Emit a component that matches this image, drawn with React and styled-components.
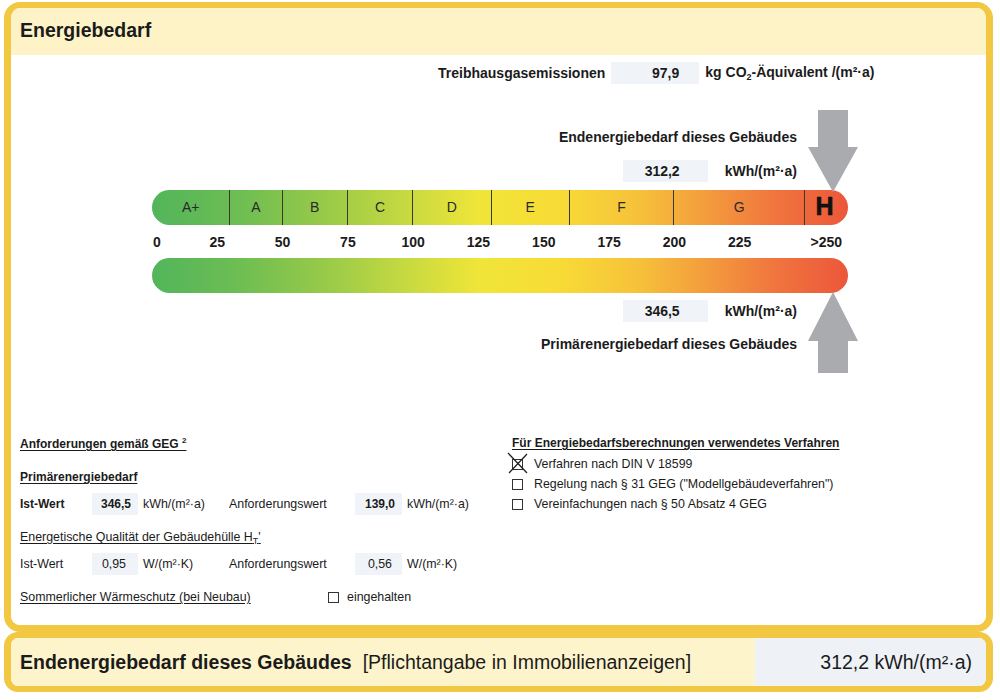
import React from 'react';
import styled, { createGlobalStyle } from 'styled-components';

const GlobalStyle = createGlobalStyle`
  html, body {
    margin: 0;
    padding: 0;
    background: #ffffff;
  }
  body {
    font-family: "Liberation Sans", Arial, sans-serif;
    color: #1b1b1b;
  }
`;

// px per kWh/(m²·a) on the scale
const SCALE = 2.612;

const classes = [
    { label: 'A+', from: 0, to: 30 },
    { label: 'A', from: 30, to: 50 },
    { label: 'B', from: 50, to: 75 },
    { label: 'C', from: 75, to: 100 },
    { label: 'D', from: 100, to: 130 },
    { label: 'E', from: 130, to: 160 },
    { label: 'F', from: 160, to: 200 },
    { label: 'G', from: 200, to: 250 },
    { label: 'H', from: 250, to: null },
];

const ticks = [25, 50, 75, 100, 125, 150, 175, 200, 225];

const methods = [
    { text: 'Verfahren nach DIN V 18599', checked: true },
    { text: 'Regelung nach § 31 GEG ("Modellgebäudeverfahren")', checked: false },
    { text: 'Vereinfachungen nach § 50 Absatz 4 GEG', checked: false },
];

const DownArrow = () => (
    <ArrowSvg width="50" height="80" viewBox="0 0 50 80">
        <polygon points="10,0 40,0 40,37 50,37 25,82 0,37 10,37" fill="#a9abae" />
    </ArrowSvg>
);

const UpArrow = () => (
    <ArrowSvg width="50" height="80" viewBox="0 0 50 80">
        <polygon points="25,-1 50,48 40,48 40,80 10,80 10,48 0,48" fill="#a9abae" />
    </ArrowSvg>
);

const CheckBox = ({ checked }) => (
    <BoxWrap>
        <Box />
        {checked && (
            <Cross width="20" height="20" viewBox="0 0 20 20">
                <path d="M0 -1 L19 19 M19 0 L1 19" stroke="#222" strokeWidth="1.3" fill="none" />
            </Cross>
        )}
    </BoxWrap>
);

const App = () => {
    return (
        <Page>
            <GlobalStyle />
            <TopPanel>
                <Header>Energiebedarf</Header>
                <Body>
                    <EmissionRow>
                        <span>Treibhausgasemissionen</span>
                        <ValueBox $w={88} $pad={20}>97,9</ValueBox>
                        <span>kg CO<sub>2</sub>-Äquivalent /(m²·a)</span>
                    </EmissionRow>

                    <Chart>
                        <InfoTop>
                            <ChartLabel>Endenergiebedarf dieses Gebäudes</ChartLabel>
                            <ValueRow>
                                <ValueBox $w={85} $pad={28}>312,2</ValueBox>
                                <Unit>kWh/(m²·a)</Unit>
                            </ValueRow>
                        </InfoTop>
                        <ArrowCell $align="end">
                            <DownArrow />
                        </ArrowCell>

                        <ClassBar>
                            {classes.map((c) => (
                                <Segment
                                    key={c.label}
                                    $last={c.to === null}
                                    style={c.to === null ? undefined : { width: (c.to - c.from) * SCALE }}
                                >
                                    {c.label === 'H' ? <BigH>H</BigH> : c.label}
                                </Segment>
                            ))}
                        </ClassBar>

                        <Axis>
                            <FirstTick>0</FirstTick>
                            {ticks.map((t) => (
                                <Tick key={t} style={{ width: 25 * SCALE }}>{t}</Tick>
                            ))}
                            <LastTick>&gt;250</LastTick>
                        </Axis>

                        <GradientBar />

                        <InfoBottom>
                            <ValueRow>
                                <ValueBox $w={85} $pad={28}>346,5</ValueBox>
                                <Unit>kWh/(m²·a)</Unit>
                            </ValueRow>
                            <ChartLabel>Primärenergiebedarf dieses Gebäudes</ChartLabel>
                        </InfoBottom>
                        <ArrowCell $align="start">
                            <UpArrow />
                        </ArrowCell>
                    </Chart>

                    <Lower>
                        <Column>
                            <Heading $bold>Anforderungen gemäß GEG <Sup>2</Sup></Heading>
                            <Heading $bold $top={17}>Primärenergiebedarf</Heading>
                            <ReqRow $bold $top={8}>
                                <span>Ist-Wert</span>
                                <SmallBox>346,5</SmallBox>
                                <ReqUnit>kWh/(m²·a)</ReqUnit>
                                <ReqLabel>Anforderungswert</ReqLabel>
                                <SmallBox>139,0</SmallBox>
                                <ReqUnit>kWh/(m²·a)</ReqUnit>
                            </ReqRow>
                            <Heading $top={14}>
                                Energetische Qualität der Gebäudehülle H<sub>T</sub>'
                            </Heading>
                            <ReqRow $top={4}>
                                <span>Ist-Wert</span>
                                <SmallBox $pad={12}>0,95</SmallBox>
                                <ReqUnit>W/(m²·K)</ReqUnit>
                                <ReqLabel>Anforderungswert</ReqLabel>
                                <SmallBox $pad={10}>0,56</SmallBox>
                                <ReqUnit>W/(m²·K)</ReqUnit>
                            </ReqRow>
                            <SummerRow>
                                <Underlined>Sommerlicher Wärmeschutz (bei Neubau)</Underlined>
                                <CheckBox />
                                <span>eingehalten</span>
                            </SummerRow>
                        </Column>
                        <Column $top={2}>
                            <Heading $bold>Für Energiebedarfsberechnungen verwendetes Verfahren</Heading>
                            <MethodList>
                                {methods.map((m) => (
                                    <MethodRow key={m.text}>
                                        <CheckBox checked={m.checked} />
                                        <span>{m.text}</span>
                                    </MethodRow>
                                ))}
                            </MethodList>
                        </Column>
                    </Lower>
                </Body>
            </TopPanel>

            <BottomPanel>
                <BottomLabel>
                    <strong>Endenergiebedarf dieses Gebäudes</strong>
                    <span>[Pflichtangabe in Immobilienanzeigen]</span>
                </BottomLabel>
                <BottomValue>312,2 kWh/(m²·a)</BottomValue>
            </BottomPanel>
        </Page>
    );
}

export default App;

const yellow = '#f2c843';
const barGradient = `linear-gradient(90deg,
    #52b55b 0%, #6cbd53 12%, #98ca49 25%, #c8da40 37%,
    #f0e538 47%, #f8dc36 58%, #f6c13a 70%, #f39b3d 80%,
    #f0733e 90%, #ec573a 100%)`;

const Page = styled.div`
    width: 1000px;
    height: 700px;
    box-sizing: border-box;
    padding: 2px 7px 0 4px;
    display: flex;
    flex-direction: column;
`;

const TopPanel = styled.div`
    height: 630px;
    box-sizing: border-box;
    border: 7px solid ${yellow};
    border-top-width: 6px;
    border-radius: 16px;
    overflow: hidden;
    display: flex;
    flex-direction: column;
`;

const Header = styled.div`
    height: 47px;
    flex-shrink: 0;
    background: #fdf3c6;
    display: flex;
    align-items: center;
    padding-left: 9px;
    padding-bottom: 2px;
    box-sizing: border-box;
    font-size: 19.5px;
    font-weight: bold;
`;

const Body = styled.div`
    flex: 1;
    display: flex;
    flex-direction: column;
    background: #ffffff;
`;

const EmissionRow = styled.div`
    display: flex;
    align-items: center;
    gap: 6px;
    height: 22px;
    margin: 7px 0 0 427px;
    font-size: 14px;
    font-weight: bold;

    sub {
        font-size: 9px;
        vertical-align: -3px;
    }
`;

const ValueBox = styled.div`
    width: ${(p) => p.$w}px;
    height: 22px;
    box-sizing: border-box;
    padding-right: ${(p) => p.$pad}px;
    background: #f0f4f9;
    display: flex;
    align-items: center;
    justify-content: flex-end;
    font-weight: bold;
    font-size: 14px;
`;

const Chart = styled.div`
    display: grid;
    grid-template-columns: 656px 50px;
    margin: 26px 0 0 141px;
`;

const InfoTop = styled.div`
    height: 80px;
    box-sizing: border-box;
    padding: 17px 11px 0 0;
    display: flex;
    flex-direction: column;
    align-items: flex-end;
    gap: 13px;
`;

const InfoBottom = styled(InfoTop)`
    padding-top: 7px;
    gap: 12px;
`;

const ChartLabel = styled.div`
    font-size: 14px;
    font-weight: bold;
    line-height: 20px;
`;

const ValueRow = styled.div`
    display: flex;
    align-items: center;
    gap: 17px;
`;

const Unit = styled.span`
    font-size: 14px;
    font-weight: bold;
`;

const ArrowCell = styled.div`
    height: 80px;
    display: flex;
    align-items: ${(p) => (p.$align === 'end' ? 'flex-end' : 'flex-start')};
    position: relative;
    z-index: 1;
`;

const ArrowSvg = styled.svg`
    display: block;
    overflow: visible;
`;

const ClassBar = styled.div`
    grid-column: 1 / span 2;
    width: 696px;
    height: 35px;
    border-radius: 18px;
    overflow: hidden;
    background: ${barGradient};
    display: flex;
`;

const Segment = styled.div`
    flex: ${(p) => (p.$last ? '1' : '0 0 auto')};
    box-sizing: border-box;
    border-right: ${(p) => (p.$last ? 'none' : '1px solid #3a3a2a')};
    display: flex;
    align-items: center;
    justify-content: center;
    padding-bottom: 2px;
    font-size: 14px;
    color: #2a2a2a;
    padding-right: ${(p) => (p.$last ? '4px' : '0')};
`;

const BigH = styled.span`
    font-size: 25px;
    font-weight: bold;
    color: #111;
    -webkit-text-stroke: 0.6px #111;
`;

const Axis = styled.div`
    grid-column: 1 / span 2;
    width: 696px;
    height: 33px;
    display: flex;
    align-items: center;
    font-size: 14px;
    font-weight: bold;
`;

const FirstTick = styled.span`
    width: 32.65px;
    padding-left: 1px;
    box-sizing: border-box;
`;

const Tick = styled.span`
    text-align: center;
    flex-shrink: 0;
`;

const LastTick = styled.span`
    flex: 1;
    text-align: right;
    padding-right: 6px;
`;

const GradientBar = styled.div`
    grid-column: 1 / span 2;
    width: 696px;
    height: 35px;
    border-radius: 18px;
    background: ${barGradient};
`;

const Lower = styled.div`
    display: grid;
    grid-template-columns: 492px 1fr;
    margin-top: 60px;
    padding-left: 9px;
    font-size: 12.4px;
`;

const Column = styled.div`
    display: flex;
    flex-direction: column;
    margin-top: ${(p) => p.$top || 0}px;
`;

const Heading = styled.div`
    line-height: 16px;
    margin-top: ${(p) => p.$top || 0}px;
    font-weight: ${(p) => (p.$bold ? 'bold' : 'normal')};
    font-size: ${(p) => (p.$bold ? '12px' : '12.4px')};
    text-decoration: underline;
    text-underline-offset: 2px;

    sub {
        font-size: 9px;
        vertical-align: -3px;
    }
`;

const Sup = styled.sup`
    font-size: 8px;
    vertical-align: 5px;
`;

const ReqRow = styled.div`
    display: grid;
    grid-template-columns: 72px 46px 91px 126px 47px auto;
    align-items: center;
    margin-top: ${(p) => p.$top}px;
    font-weight: ${(p) => (p.$bold ? 'bold' : 'normal')};
    font-size: ${(p) => (p.$bold ? '12px' : '12.4px')};
`;

const SmallBox = styled.div`
    height: 22px;
    box-sizing: border-box;
    background: #f0f4f9;
    display: flex;
    align-items: center;
    justify-content: flex-end;
    padding-right: ${(p) => p.$pad || 7}px;
`;

const ReqUnit = styled.span`
    padding-left: 5px;
    font-weight: normal;
    font-size: 12.4px;
`;

const ReqLabel = styled.span`
    font-weight: normal;
    font-size: 12.4px;
`;

const SummerRow = styled.div`
    display: grid;
    grid-template-columns: 308px 19px auto;
    align-items: center;
    margin-top: 14px;
    line-height: 16px;
`;

const Underlined = styled.span`
    text-decoration: underline;
    text-underline-offset: 2px;
`;

const MethodList = styled.div`
    display: flex;
    flex-direction: column;
    margin-top: 3px;
`;

const MethodRow = styled.div`
    display: flex;
    align-items: center;
    gap: 11px;
    height: 20px;
`;

const BoxWrap = styled.span`
    position: relative;
    width: 11px;
    height: 11px;
    display: inline-block;
`;

const Box = styled.span`
    display: block;
    width: 11px;
    height: 11px;
    box-sizing: border-box;
    border: 1px solid #333;
    background: #fff;
`;

const Cross = styled.svg`
    position: absolute;
    left: -4px;
    top: -5px;
    overflow: visible;
`;

const BottomPanel = styled.div`
    height: 60px;
    box-sizing: border-box;
    border: 7px solid ${yellow};
    border-top-width: 6px;
    border-bottom-width: 6px;
    border-radius: 14px;
    overflow: hidden;
    display: flex;
`;

const BottomLabel = styled.div`
    flex: 1;
    background: #fdf4cc;
    display: flex;
    align-items: center;
    gap: 11px;
    padding-left: 9px;
    font-size: 19.5px;

    strong {
        font-weight: bold;
    }
`;

const BottomValue = styled.div`
    width: 231px;
    background: #eef2f7;
    display: flex;
    align-items: center;
    justify-content: flex-end;
    padding-right: 14px;
    box-sizing: border-box;
    font-size: 19.5px;
`;
